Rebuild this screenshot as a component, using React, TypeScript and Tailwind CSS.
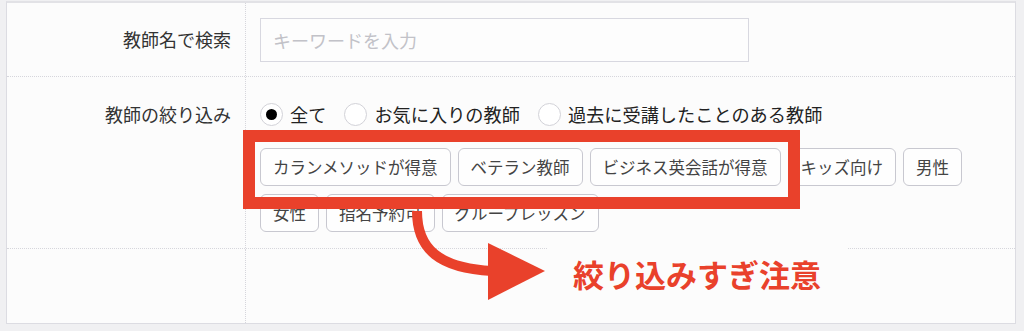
import React from "react";

const tagsRow = [
  "カランメソッドが得意",
  "ベテラン教師",
  "ビジネス英会話が得意",
  "キッズ向け",
  "男性",
  "女性",
  "指名予約可",
  "グループレッスン",
];

function Radio({ checked, label }: { checked?: boolean; label: string }) {
  return (
    <div className="flex items-center gap-[7px]">
      <span className="w-[23px] h-[23px] rounded-full border border-[#d2d2d8] bg-white flex items-center justify-center">
        {checked && <span className="w-[11px] h-[11px] rounded-full bg-black" />}
      </span>
      <span className="text-[18.2px] leading-none text-[#222]">{label}</span>
    </div>
  );
}

export default function App() {
  return (
    <div
      className="w-[1024px] h-[331px] bg-[#f0f0f2] flex relative overflow-hidden"
      style={{ fontFamily: '"Noto Sans CJK JP", "Noto Sans", sans-serif' }}
    >
      <div className="w-[6px] shrink-0" />
      <div className="w-[1010px] shrink-0 mt-[1px] h-[323px] bg-[#fcfcfc] border-l border-r border-b border-[#dcdce2] border-t-2 border-t-[#e2e2e6] flex flex-col">
        {/* Row 1 */}
        <div className="grid grid-cols-[239px_1fr] h-[74px] border-b border-dotted border-[#d6d6dc]">
          <div className="border-r border-dotted border-[#d6d6dc] flex items-center justify-end pr-[14px] text-[18px] text-[#333]">
            教師名で検索
          </div>
          <div className="pl-[14px] pt-[15px]">
            <div className="w-[489px] h-[44px] border border-[#d8d8e0] bg-[#fdfdfd] flex items-center pl-[12px] text-[18px] text-[#c2c2c8]">
              キーワードを入力
            </div>
          </div>
        </div>
        {/* Row 2 */}
        <div className="grid grid-cols-[239px_1fr] h-[172px] border-b border-dotted border-[#d6d6dc]">
          <div className="border-r border-dotted border-[#d6d6dc] flex justify-end pr-[14px] pt-[26px]">
            <span className="h-[23px] flex items-center text-[18px] text-[#333]">教師の絞り込み</span>
          </div>
          <div className="pl-[14px] pr-[14px] pt-[26px]">
            <div className="flex items-center gap-[18px]">
              <Radio checked label="全て" />
              <Radio label="お気に入りの教師" />
              <Radio label="過去に受講したことのある教師" />
            </div>
            <div className="mt-[22px] flex flex-wrap gap-x-[7px] gap-y-[8px] w-[740px]">
              {tagsRow.map((t) => (
                <div
                  key={t}
                  className="h-[38px] px-[12px] flex items-center border border-[#c8c8d0] rounded-[6px] bg-[#fefefe] text-[16.5px] leading-none text-[#444] whitespace-nowrap"
                >
                  {t}
                </div>
              ))}
            </div>
          </div>
        </div>
        {/* Row 3 */}
        <div className="grid grid-cols-[239px_1fr] flex-1">
          <div className="border-r border-dotted border-[#d6d6dc]" />
          <div />
        </div>
      </div>
      <div className="flex-1" />

      {/* Annotation overlay */}
      <div className="absolute left-[243px] top-[130px] w-[557px] h-[79px] border-[12px] border-[#e9412b]" />
      <div className="absolute left-[548px] top-[244px] w-[300px] h-[56px] bg-[#fcfcfc]" />
      <svg className="absolute left-[400px] top-[205px]" width="160" height="105" viewBox="0 0 160 105">
        <path d="M17 6 C 17 45, 40 63, 92 66" fill="none" stroke="#e9412b" strokeWidth="10" />
        <polygon points="88,38 88,95 145,66" fill="#e9412b" />
      </svg>
      <div className="absolute left-[573px] top-[252px] h-[42px] flex items-center text-[31px] font-bold leading-none text-[#e9412b] whitespace-nowrap">
        絞り込みすぎ注意
      </div>
    </div>
  );
}
